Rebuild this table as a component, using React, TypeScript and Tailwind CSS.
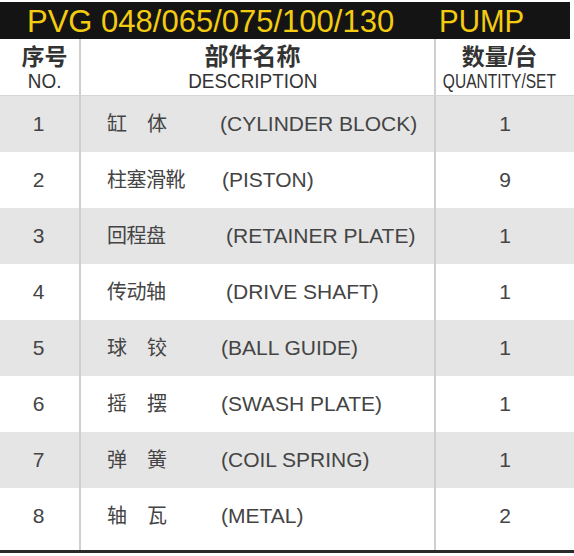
const rows = [
  { no: "1", cn: ["缸", "体"], en: "(CYLINDER BLOCK)", qty: "1", enPad: "pl-0" },
  { no: "2", cn: ["柱塞滑靴"], en: "(PISTON)", qty: "9", enPad: "pl-[2px]" },
  { no: "3", cn: ["回程盘"], en: "(RETAINER PLATE)", qty: "1", enPad: "pl-[6px]" },
  { no: "4", cn: ["传动轴"], en: "(DRIVE SHAFT)", qty: "1", enPad: "pl-[6px]" },
  { no: "5", cn: ["球", "铰"], en: "(BALL GUIDE)", qty: "1", enPad: "pl-[1px]" },
  { no: "6", cn: ["摇", "摆"], en: "(SWASH PLATE)", qty: "1", enPad: "pl-[1px]" },
  { no: "7", cn: ["弹", "簧"], en: "(COIL SPRING)", qty: "1", enPad: "pl-[1px]" },
  { no: "8", cn: ["轴", "瓦"], en: "(METAL)", qty: "2", enPad: "pl-[1px]" },
];

const latin = "font-['Liberation_Sans','Helvetica',Arial,sans-serif]";
const cjk = "font-['Liberation_Sans','Noto_Sans_CJK_SC',sans-serif]";

export default function App() {
  return (
    <div className="h-[556px] w-[574px] overflow-hidden bg-white pt-[2px]">
      {/* title bar */}
      <div className="flex h-[37px] w-[570px] items-center bg-[#141414] pl-[27px] pt-[1px]">
        <span className={`${latin} whitespace-nowrap text-[31px] leading-none text-[#f3cc10]`}>
          PVG 048/065/075/100/130
        </span>
        <span className={`${latin} ml-[45px] inline-block origin-left scale-x-[0.95] text-[31px] leading-none text-[#f3cc10]`}>
          PUMP
        </span>
      </div>

      {/* header */}
      <div className="flex h-[57px] border-b border-[#d6d6d6]">
        <div className="flex w-[79px] shrink-0 flex-col items-center pl-[10px] pt-[5px]">
          <span className={`${cjk} text-[23px] font-bold leading-[26px] text-[#333]`}>序号</span>
          <span className={`${latin} inline-block origin-center scale-x-[0.9] text-[21px] leading-[21px] text-[#333]`}>
            NO.
          </span>
        </div>
        <div className="w-[2px] shrink-0 bg-[#cfcfcf]" />
        <div className="flex w-[353px] shrink-0 flex-col items-center pr-[10px] pt-[5px]">
          <span className={`${cjk} text-[24px] font-bold leading-[26px] text-[#333]`}>部件名称</span>
          <span className={`${latin} inline-block origin-center scale-x-[0.9] text-[21px] leading-[21px] text-[#333]`}>
            DESCRIPTION
          </span>
        </div>
        <div className="w-[2px] shrink-0 bg-[#cfcfcf]" />
        <div className="flex min-w-0 flex-1 flex-col items-center pr-[11px] pt-[5px]">
          <span className={`${cjk} text-[23px] font-bold leading-[26px] text-[#333]`}>数量/台</span>
          <span className={`${latin} inline-block shrink-0 origin-center scale-x-[0.74] whitespace-nowrap text-[21px] leading-[21px] text-[#333]`}>
            QUANTITY/SET
          </span>
        </div>
      </div>

      {/* body */}
      <div className="flex flex-col">
        {rows.map((r, i) => (
          <div
            key={r.no}
            className={`flex h-[56px] items-stretch ${i % 2 === 0 ? "bg-[#e5e5e5]" : "bg-white"}`}
          >
            <div className={`${latin} flex w-[79px] shrink-0 items-center justify-center pr-[2px] text-[21px] text-[#444]`}>
              {r.no}
            </div>
            <div className="w-[2px] shrink-0 bg-[#cfcfcf]" />
            <div className="flex w-[353px] shrink-0 items-center pl-[26px]">
              <div className={`${cjk} flex w-[113px] text-[20px] text-[#444]`}>
                {r.cn.length === 2 ? (
                  <>
                    <span>{r.cn[0]}</span>
                    <span className="ml-[20px]">{r.cn[1]}</span>
                  </>
                ) : (
                  <span className="tracking-[-0.5px]">{r.cn[0]}</span>
                )}
              </div>
              <span className={`${latin} ${r.enPad} whitespace-nowrap text-[21px] text-[#444]`}>
                {r.en}
              </span>
            </div>
            <div className="w-[2px] shrink-0 bg-[#cfcfcf]" />
            <div className={`${latin} flex min-w-0 flex-1 items-center justify-center text-[21px] text-[#444]`}>
              {r.qty}
            </div>
          </div>
        ))}
        <div className="flex h-[6px]">
          <div className="w-[79px] shrink-0" />
          <div className="w-[2px] shrink-0 bg-[#cfcfcf]" />
          <div className="w-[353px] shrink-0" />
          <div className="w-[2px] shrink-0 bg-[#cfcfcf]" />
        </div>
        <div className="h-[3px] bg-[#2a2a2a]" />
      </div>
    </div>
  );
}
